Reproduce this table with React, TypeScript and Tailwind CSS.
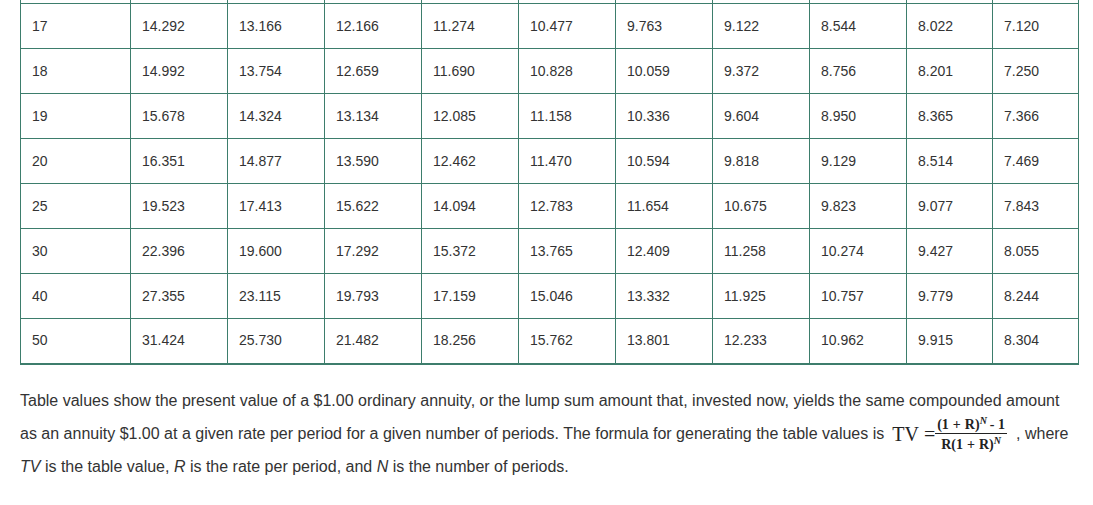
const rows: [string, string[]][] = [
  ['16', ['13.578', '12.561', '11.652', '10.838', '10.106', '9.447', '8.851', '8.313', '7.824', '6.974']],
  ['17', ['14.292', '13.166', '12.166', '11.274', '10.477', '9.763', '9.122', '8.544', '8.022', '7.120']],
  ['18', ['14.992', '13.754', '12.659', '11.690', '10.828', '10.059', '9.372', '8.756', '8.201', '7.250']],
  ['19', ['15.678', '14.324', '13.134', '12.085', '11.158', '10.336', '9.604', '8.950', '8.365', '7.366']],
  ['20', ['16.351', '14.877', '13.590', '12.462', '11.470', '10.594', '9.818', '9.129', '8.514', '7.469']],
  ['25', ['19.523', '17.413', '15.622', '14.094', '12.783', '11.654', '10.675', '9.823', '9.077', '7.843']],
  ['30', ['22.396', '19.600', '17.292', '15.372', '13.765', '12.409', '11.258', '10.274', '9.427', '8.055']],
  ['40', ['27.355', '23.115', '19.793', '17.159', '15.046', '13.332', '11.925', '10.757', '9.779', '8.244']],
  ['50', ['31.424', '25.730', '21.482', '18.256', '15.762', '13.801', '12.233', '10.962', '9.915', '8.304']],
];

const widths = [110, 97, 97, 97, 97, 97, 97, 97, 97, 86, 86];

// (1 + R)^N with spaced plus sign, mathjax-ish
function OnePlusR() {
  return (
    <>
      (1<span className="mx-[4px]">+</span>R)
      <span className="text-[10px] italic align-[5px] leading-none">N</span>
    </>
  );
}

function Formula() {
  return (
    <span className="inline-flex items-center align-middle -my-[6px] ml-2 mr-[9px] font-['Liberation_Serif',serif] text-[#222] leading-none">
      <span className="text-[20px]">TV</span>
      <span className="text-[20px] ml-[5px]">=</span>
      <span className="inline-flex flex-col items-center text-[14px] font-bold leading-[14px]">
        <span className="px-[2px] pb-[1px] border-b border-[#222] whitespace-nowrap">
          <OnePlusR />
          <span className="ml-[3px]">- 1</span>
        </span>
        <span className="px-[2px] pt-[2px] whitespace-nowrap">
          R<OnePlusR />
        </span>
      </span>
    </span>
  );
}

export default function App() {
  return (
    <div className="w-[1093px] h-[505px] overflow-hidden bg-white font-['Liberation_Sans',Arial,sans-serif] text-[#333]">
      <div className="px-5 -mt-[42px]">
        <table className="table-fixed border-collapse w-[1058px] border-b-2 border-[#3d7d6c] text-[14px]">
          <colgroup>
            {widths.map((w, i) => (
              <col key={i} style={{ width: w }} />
            ))}
          </colgroup>
          <tbody>
            {rows.map(([n, vals]) => (
              <tr key={n} className="h-[45px]">
                <td className="border border-[#3d7d6c] pl-[11px] align-middle">{n}</td>
                {vals.map((v, i) => (
                  <td key={i} className="border border-[#3d7d6c] pl-[11px] align-middle">
                    {v}
                  </td>
                ))}
              </tr>
            ))}
          </tbody>
        </table>
        <p className="mt-[19px] text-[16px] leading-[33px] text-[#333]">
          Table values show the present value of a $1.00 ordinary annuity, or the lump sum amount that, invested now, yields the same compounded amount as an annuity $1.00 at a given rate per period for a given number of periods. The formula for generating the table values is
          <Formula />, where <i>TV</i> is the table value, <i>R</i> is the rate per period, and <i>N</i> is the number of periods.
        </p>
      </div>
    </div>
  );
}
